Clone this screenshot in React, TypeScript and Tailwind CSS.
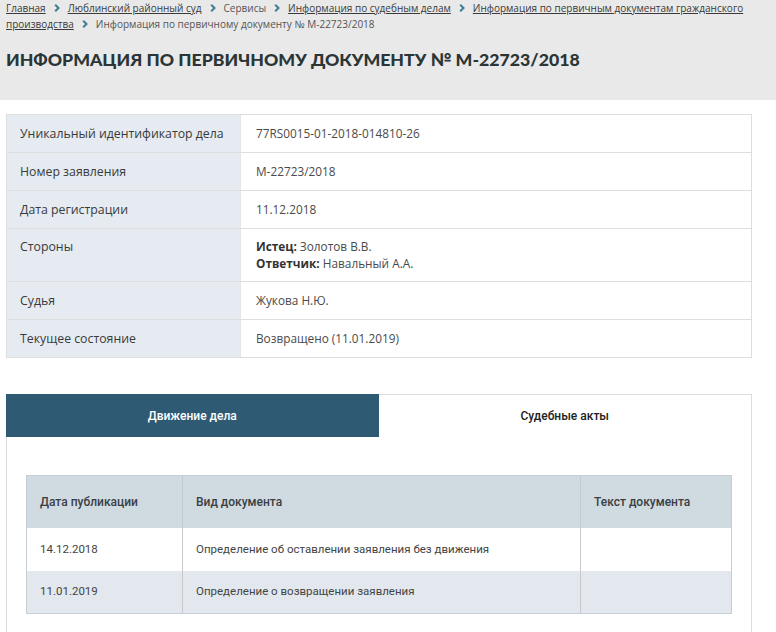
import React from "react";

const Chevron = () => (
  <svg width="6" height="8" viewBox="0 0 6 8" className="inline-block mx-[8px] align-[0px]">
    <path d="M1.2 0.8 L4.5 4 L1.2 7.2" fill="none" stroke="#3e7c96" strokeWidth="2" />
  </svg>
);

const infoRows: { label: string; value: React.ReactNode; double?: boolean }[] = [
  { label: "Уникальный идентификатор дела", value: "77RS0015-01-2018-014810-26" },
  { label: "Номер заявления", value: "М-22723/2018" },
  { label: "Дата регистрации", value: "11.12.2018" },
  {
    label: "Стороны",
    double: true,
    value: (
      <>
        <div>
          <b className="font-bold text-[#333]">Истец:</b> Золотов В.В.
        </div>
        <div>
          <b className="font-bold text-[#333]">Ответчик:</b> Навальный А.А.
        </div>
      </>
    ),
  },
  { label: "Судья", value: "Жукова Н.Ю." },
  { label: "Текущее состояние", value: "Возвращено (11.01.2019)" },
];

export default function App() {
  return (
    <div className="w-[776px] h-[632px] overflow-hidden bg-white" style={{ fontFamily: '"Open Sans", sans-serif' }}>
      <div className="bg-[#e9e9e9] h-[100px] px-[6px]">
        <div className="text-[10px] leading-[16px] text-[#555]">
          <div>
            <a className="underline text-[#3a3a3a]">Главная</a>
            <Chevron />
            <a className="underline text-[#3a3a3a]">Люблинский районный суд</a>
            <Chevron />
            <span>Сервисы</span>
            <Chevron />
            <a className="underline text-[#3a3a3a]">Информация по судебным делам</a>
            <Chevron />
            <a className="underline text-[#3a3a3a]">Информация по первичным документам гражданского</a>
          </div>
          <div>
            <a className="underline text-[#3a3a3a]">производства</a>
            <Chevron />
            <span>Информация по первичному документу № М-22723/2018</span>
          </div>
        </div>
        <h1
          className="mt-[15px] text-[17.7px] leading-[26px] font-black uppercase text-[#2b3535]"
          style={{ fontFamily: "Lato, sans-serif" }}
        >
          Информация по первичному документу № М-22723/2018
        </h1>
      </div>

      <div className="pl-[6px] pr-[24px] pt-[14px]">
        <div className="border border-[#dedede] text-[12.3px] text-[#3a3a3a]">
          {infoRows.map((r, i) => (
            <div key={i} className={`grid grid-cols-[233px_1fr] ${i > 0 ? "border-t border-[#dedede]" : ""}`}>
              <div className={`bg-[#e5ebf1] px-[13px] leading-[17px] ${r.double ? "py-[9px]" : "py-[10px]"}`}>{r.label}</div>
              <div
                className={`px-[15px] leading-[17px] border-l border-[#e6e6e6] text-[11.8px] text-[#4a4a4a] ${
                  r.double ? "py-[9px]" : "py-[10px]"
                }`}
              >
                {r.value}
              </div>
            </div>
          ))}
        </div>

        <div className="mt-[36px] border border-[#dddddd] h-[300px]" style={{ fontFamily: "Roboto, sans-serif" }}>
          <div className="grid grid-cols-2 h-[43px] -mt-px -ml-px">
            <div className="bg-[#2e5a73] text-white font-medium text-[12px] flex items-center justify-center">
              Движение дела
            </div>
            <div className="text-[#222] font-medium text-[12px] flex items-center justify-center">Судебные акты</div>
          </div>
          <div className="px-[19px] pt-[38px]">
            <div className="border border-[#c6ced5] text-[11.5px] text-[#444]">
              <div className="grid grid-cols-[155px_398px_1fr] bg-[#d0dae1] h-[52px] font-medium text-[12px] text-[#3a3f44]">
                <div className="flex items-center px-[13px]">Дата публикации</div>
                <div className="flex items-center px-[13px] border-l border-[#c2c9cf]">Вид документа</div>
                <div className="flex items-center px-[13px] border-l border-[#c2c9cf]">Текст документа</div>
              </div>
              <div className="grid grid-cols-[155px_398px_1fr] bg-white h-[43px]">
                <div className="flex items-center px-[13px]">14.12.2018</div>
                <div className="flex items-center px-[13px] border-l border-[#c8c8c8]">
                  Определение об оставлении заявления без движения
                </div>
                <div className="border-l border-[#c8c8c8]"></div>
              </div>
              <div className="grid grid-cols-[155px_398px_1fr] bg-[#e2e8ee] h-[42px]">
                <div className="flex items-center px-[13px]">11.01.2019</div>
                <div className="flex items-center px-[13px] border-l border-[#c8c8c8]">
                  Определение о возвращении заявления
                </div>
                <div className="border-l border-[#c8c8c8]"></div>
              </div>
            </div>
          </div>
        </div>
      </div>
    </div>
  );
}
